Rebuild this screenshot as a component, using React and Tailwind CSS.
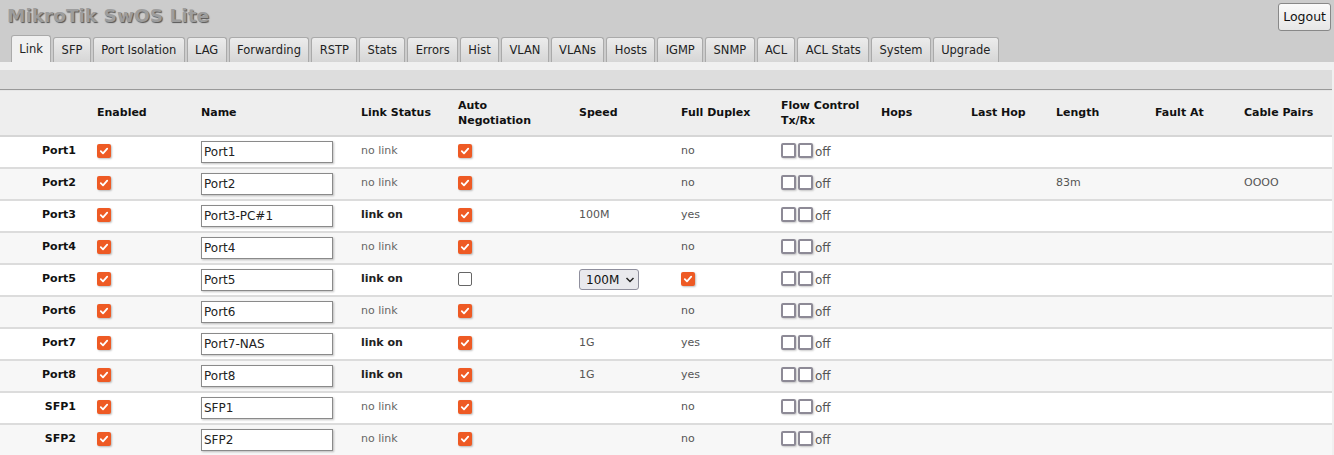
import React from 'react';

const tabs = ['Link', 'SFP', 'Port Isolation', 'LAG', 'Forwarding', 'RSTP', 'Stats', 'Errors', 'Hist', 'VLAN', 'VLANs', 'Hosts', 'IGMP', 'SNMP', 'ACL', 'ACL Stats', 'System', 'Upgrade'];

const ports = [
  { label: 'Port1', name: 'Port1', link: false, auto: true, speed: '', duplex: 'no' },
  { label: 'Port2', name: 'Port2', link: false, auto: true, speed: '', duplex: 'no', length: '83m', pairs: 'OOOO' },
  { label: 'Port3', name: 'Port3-PC#1', link: true, auto: true, speed: '100M', duplex: 'yes' },
  { label: 'Port4', name: 'Port4', link: false, auto: true, speed: '', duplex: 'no' },
  { label: 'Port5', name: 'Port5', link: true, auto: false, speed: '100M', duplex: 'check' },
  { label: 'Port6', name: 'Port6', link: false, auto: true, speed: '', duplex: 'no' },
  { label: 'Port7', name: 'Port7-NAS', link: true, auto: true, speed: '1G', duplex: 'yes' },
  { label: 'Port8', name: 'Port8', link: true, auto: true, speed: '1G', duplex: 'yes' },
  { label: 'SFP1', name: 'SFP1', link: false, auto: true, speed: '', duplex: 'no' },
  { label: 'SFP2', name: 'SFP2', link: false, auto: true, speed: '', duplex: 'no' },
];

function Check() {
  return (
    <span className="inline-flex w-[14px] h-[14px] items-center justify-center rounded-[2px] bg-[#ee5a24] shadow-[1px_1px_2px_rgba(0,0,0,0.25)] align-middle">
      <svg width="10" height="10" viewBox="0 0 10 10">
        <path d="M1.8 5.2 L4 7.3 L8.2 2.6" stroke="white" strokeWidth="1.8" fill="none" strokeLinecap="round" strokeLinejoin="round" />
      </svg>
    </span>
  );
}

function Box() {
  return <span className="inline-block w-[15px] h-[15px] rounded-[2px] border-2 border-[#8d8a96] bg-white shadow-[1px_1px_2px_rgba(0,0,0,0.2)] align-middle" />;
}

export default function App() {
  return (
    <div className="w-[1334px] h-[455px] overflow-hidden bg-[#f0f0f0] text-[11px] text-[#333] font-['DejaVu_Sans',Verdana,sans-serif]">
      {/* Header */}
      <div className="bg-[#cccccc] h-[62px] flex flex-col justify-between relative">
        <div className="pl-[7px] pt-[3px] text-[18.5px] font-bold text-[#9d9d9d] [text-shadow:1px_1px_1px_#555] leading-[26px]">MikroTik SwOS Lite</div>
        <button className="absolute right-[3px] top-[3px] h-[28px] px-[4px] text-[12.5px] text-[#111] border border-[#888] rounded-[3px] bg-gradient-to-b from-[#fafafa] to-[#e6e6e6]">Logout</button>
        <div className="flex items-end gap-[2px] pl-[11px]">
          {tabs.map((t, i) => (
            <div
              key={t}
              className={
                i === 0
                  ? 'h-[27px] px-[7.35px] pt-[5px] text-[11.5px] text-[#222] bg-[#f0f0f0] border border-b-0 border-[#aaa] rounded-t-[3px]'
                  : 'h-[25px] px-[7.35px] pt-[4px] text-[11.5px] text-[#222] bg-gradient-to-b from-[#ececec] to-[#d6d6d6] border border-b-0 border-[#aaa] rounded-t-[3px]'
              }
            >
              {t}
            </div>
          ))}
        </div>
      </div>
      <div className="h-[8px] bg-[#f0f0f0]" />
      <div className="h-[20px] bg-[#dddddd] border-b border-[#999] w-[1332px]" />

      {/* Table */}
      <table className="w-[1332px] border-collapse table-fixed">
        <colgroup>
          <col className="w-[89px]" />
          <col className="w-[104px]" />
          <col className="w-[160px]" />
          <col className="w-[97px]" />
          <col className="w-[121px]" />
          <col className="w-[102px]" />
          <col className="w-[100px]" />
          <col className="w-[100px]" />
          <col className="w-[90px]" />
          <col className="w-[85px]" />
          <col className="w-[99px]" />
          <col className="w-[89px]" />
          <col className="w-[96px]" />
        </colgroup>
        <thead>
          <tr className="h-[45px] bg-[#eeeeee] border-t border-[#e6e6e6] border-b-2 border-b-[#d6d6d6] text-left font-bold text-[#111]">
            <th />
            <th className="pl-[8px] font-bold">Enabled</th>
            <th className="pl-[8px] font-bold">Name</th>
            <th className="pl-[8px] font-bold">Link Status</th>
            <th className="pl-[8px] font-bold leading-[15px]">Auto<br />Negotiation</th>
            <th className="pl-[8px] font-bold">Speed</th>
            <th className="pl-[8px] font-bold">Full Duplex</th>
            <th className="pl-[8px] font-bold leading-[15px]">Flow Control<br />Tx/Rx</th>
            <th className="pl-[8px] font-bold">Hops</th>
            <th className="pl-[8px] font-bold">Last Hop</th>
            <th className="pl-[8px] font-bold">Length</th>
            <th className="pl-[8px] font-bold">Fault At</th>
            <th className="pl-[8px] font-bold">Cable Pairs</th>
          </tr>
        </thead>
        <tbody>
          {ports.map((p, i) => (
            <tr key={p.label} className={`h-[32px] border-b-2 border-[#dcdcdc] ${i % 2 === 0 ? 'bg-white' : 'bg-[#f7f7f7]'}`}>
              <td className="text-right pr-[13px] font-bold text-[#111]">{p.label}</td>
              <td className="pl-[8px]"><Check /></td>
              <td className="pl-[8px]">
                <div className="w-[132px] h-[22px] border border-[#8a8a8a] bg-white shadow-[1px_1px_2px_rgba(0,0,0,0.25)] text-[12px] text-[#222] pl-[2px] leading-[20px]">{p.name}</div>
              </td>
              <td className={`pl-[8px] ${p.link ? 'font-bold text-[#222]' : 'text-[#666]'}`}>{p.link ? 'link on' : 'no link'}</td>
              <td className="pl-[8px]">
                {p.auto ? <Check /> : <span className="inline-block w-[14px] h-[14px] rounded-[2px] border border-[#666] bg-white align-middle" />}
              </td>
              <td className="pl-[8px] text-[#555]">
                {p.auto ? p.speed : (
                  <span className="inline-flex items-center gap-[6px] w-[60px] h-[21px] pl-[6px] border border-[#8f8f9d] rounded-[3px] bg-[#e9e9ed] text-[12px] text-[#111]">
                    100M
                    <svg width="10" height="8" viewBox="0 0 10 8"><path d="M1.5 2 L5 5.5 L8.5 2" stroke="#222" strokeWidth="1.5" fill="none" /></svg>
                  </span>
                )}
              </td>
              <td className="pl-[8px] text-[#555]">{p.duplex === 'check' ? <Check /> : p.duplex}</td>
              <td className="pl-[8px]">
                <span className="inline-flex items-center gap-[2px]">
                  <Box /><Box /><span className="text-[12px] text-[#555] mt-[3px]">off</span>
                </span>
              </td>
              <td />
              <td />
              <td className="pl-[8px] text-[#555]">{p.length}</td>
              <td />
              <td className="pl-[8px] text-[#555]">{p.pairs}</td>
            </tr>
          ))}
        </tbody>
      </table>
    </div>
  );
}
